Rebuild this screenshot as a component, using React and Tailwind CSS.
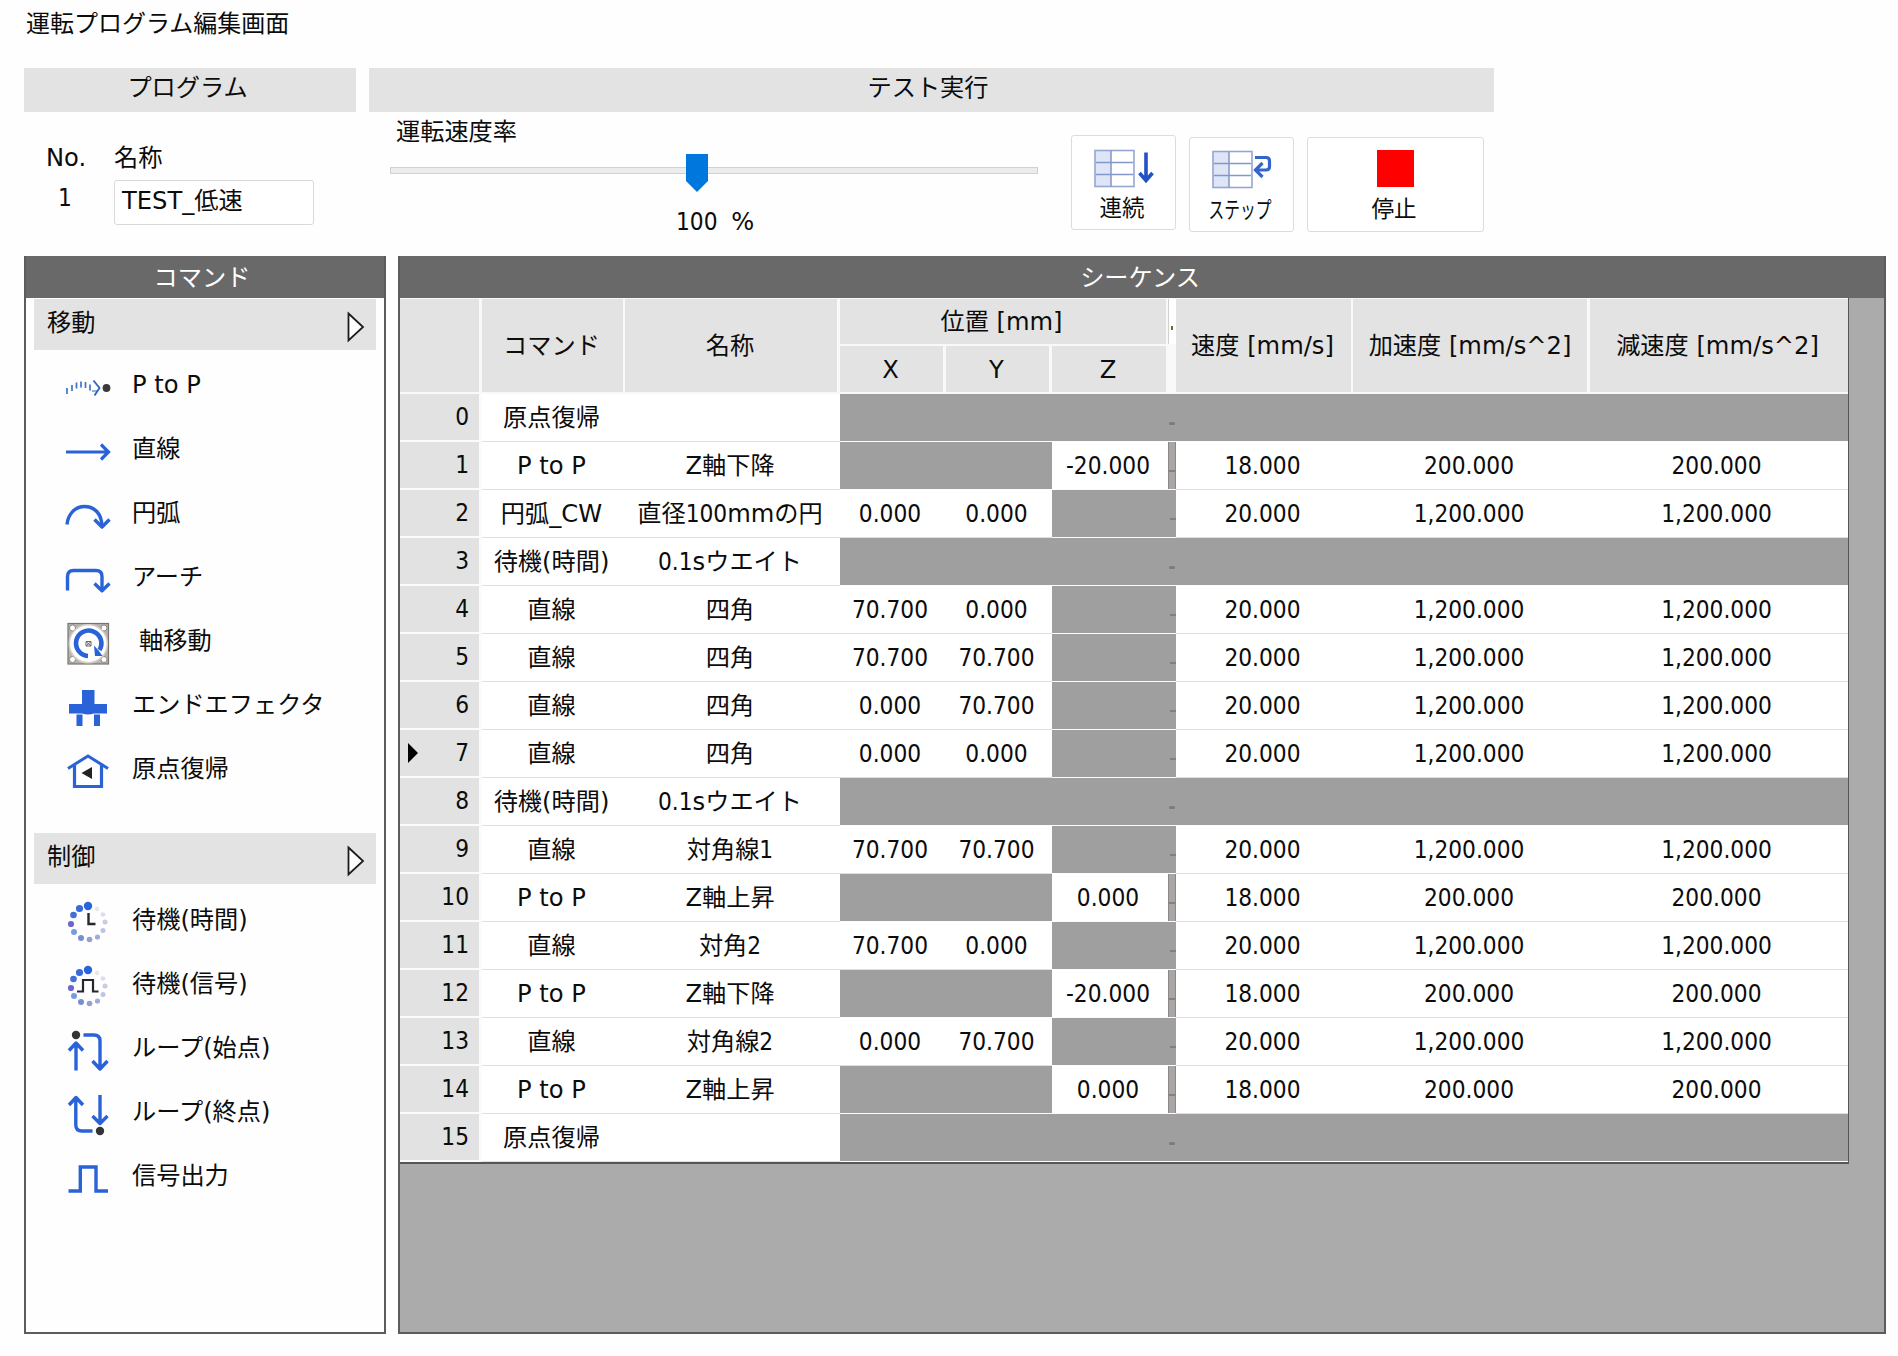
import React from "react";

const BLUE = "#2a62d8";

const stroke = {
  fill: "none",
  stroke: BLUE,
  strokeWidth: 3.4,
  strokeLinecap: "butt",
  strokeLinejoin: "round",
};

function Icon({ children }) {
  return (
    <svg width="48" height="48" viewBox="0 0 48 48" className="mr-[20px] shrink-0">
      {children}
    </svg>
  );
}

const dial = [
  [24, 8, 4.2, "#2b63dc", 1],
  [15.5, 10.5, 3.6, "#2b63dc", 0.95],
  [9.5, 17, 3.3, "#3a67d6", 0.95],
  [7, 26, 3.1, "#5a56c8", 0.9],
  [10, 34, 3, "#4a78d8", 0.75],
  [17, 40, 3, "#5272c8", 0.8],
  [25.5, 41.5, 2.8, "#6f80c4", 0.75],
  [33.5, 39, 2.6, "#6f80c4", 0.65],
  [39, 32.5, 2.5, "#8896cc", 0.55],
  [41, 24, 2.5, "#8f98d0", 0.5],
  [39, 16.5, 2.3, "#a8acd8", 0.4],
  [33, 11, 2.2, "#a8a8d0", 0.3],
];

function Dial() {
  return dial.map(([x, y, r, c, o]) => (
    <circle key={x + "-" + y} cx={x} cy={y} r={r} fill={c} opacity={o} />
  ));
}

const icons = {
  ptop: (
    <Icon>
      {[
        [3, 28], [8, 25], [12.5, 22.5], [17, 21.5], [21.5, 22], [26, 24.5],
      ].map(([x, y]) => (
        <path key={x} d={`M${x} ${y - 3}V${y + 3}`} stroke="#3f74c8" strokeWidth="1.7" />
      ))}
      <path d="M28 28H33" fill="none" stroke="#5a88d0" strokeWidth="1.300" />
      <path d="M29.500 17.500L35.500 25L30.500 32.500" fill="none" stroke="#2e68c0" strokeWidth="1.900" />
      <circle cx="42.500" cy="25" r="3.900" fill="#3a3a3e" />
    </Icon>
  ),
  line: (
    <Icon>
      <path d="M2 25H44M37 17.500L44.500 25L37 32.500" {...stroke} strokeWidth="3.200" strokeLinejoin="miter" />
    </Icon>
  ),
  arc: (
    <Icon>
      <path d="M3 33.500C4 23 11 15.500 20.500 15.500C31 15.500 37.500 23 38 35" {...stroke} />
      <path d="M30.500 28.500L38 36L45.500 28.500" {...stroke} />
    </Icon>
  ),
  arch: (
    <Icon>
      <path d="M3.500 35.500V21.500Q3.500 15.500 9.500 15.500H32Q38 15.500 38 21.500V35" {...stroke} />
      <path d="M30.500 28.500L38 35.800L45.500 28.500" {...stroke} />
    </Icon>
  ),
  axis: (
    <Icon>
      <rect x="4" y="4.500" width="40.500" height="40.500" fill="#b5b3b0" stroke="#77736f" strokeWidth="1.200" />
      {[[8.500, 9], [40, 9], [8.500, 40.500], [40, 40.500]].map(([x, y]) => (
        <circle key={x + "-" + y} cx={x} cy={y} r="3" fill="#fff" stroke="#77736f" strokeWidth="0.800" />
      ))}
      <circle cx="24.300" cy="24.700" r="19" fill="#fff" stroke="#d6cfca" strokeWidth="1.500" />
      <path d="M24 37A12.700 12.700 0 1 1 35.500 31" fill="none" stroke={BLUE} strokeWidth="4.600" />
      <path d="M30 26.500L31 37L38.500 37L35 32Z" fill={BLUE} />
      <path d="M22 22.500V27H27V22.500ZM22 22.500L27 27M27 22.500L22 27" fill="none" stroke="#666" strokeWidth="1" />
    </Icon>
  ),
  effector: (
    <Icon>
      <path d="M18 7H30.500V21H43V30.500H30Q24 32.500 18 30.500H5V21H18Z" fill={BLUE} />
      <path d="M12.500 31.500H18.500V43H12.500ZM30 31.500H36V43H30Z" fill={BLUE} />
    </Icon>
  ),
  home: (
    <Icon>
      <path d="M4 21.500L24 9L44 21.500" {...stroke} strokeWidth="3" strokeLinejoin="miter" />
      <path d="M10.500 18V39.500H37.500V18" {...stroke} strokeWidth="3.200" strokeLinejoin="miter" />
      <path d="M17.500 26L28 20V32Z" fill="#222" />
    </Icon>
  ),
  waitTime: (
    <Icon>
      <Dial />
      <path d="M24.500 15V26H31.500" fill="none" stroke="#26262e" strokeWidth="2.400" />
    </Icon>
  ),
  waitSignal: (
    <Icon>
      <Dial />
      <path d="M13 29.500H19V18H29V29.500H34.500" fill="none" stroke="#26262e" strokeWidth="2.200" />
    </Icon>
  ),
  loopStart: (
    <Icon>
      <circle cx="12" cy="9" r="4.200" fill="#333338" />
      <path d="M12 44.500V18M5 24.500L12 17L19 24.500" {...stroke} />
      <path d="M19.500 9H30Q36 9 36 15V42M28.500 35L36 43L43.500 35" {...stroke} />
    </Icon>
  ),
  loopEnd: (
    <Icon>
      <path d="M5 15L12 7.500L19 15M11.800 8.500V35Q11.800 41 18 41H28.500" {...stroke} />
      <path d="M36 5V33M28.500 26L36 33.500L43.500 26" {...stroke} />
      <circle cx="36" cy="41" r="4.200" fill="#333338" />
    </Icon>
  ),
  output: (
    <Icon>
      <path d="M4.500 37H16.300V13H32V37H44" {...stroke} strokeLinejoin="miter" />
    </Icon>
  ),
};

function TableGlyph({ children }) {
  return (
    <svg width="60" height="40" viewBox="0 0 60 40" className="block">
      <rect x="1" y="1.500" width="16" height="36" fill="#dde5f7" />
      <rect x="1" y="1.500" width="39" height="36" fill="none" stroke="#97a6cf" strokeWidth="1.600" />
      <path d="M17 1.500V37.500M2 13.500H39M2 25.500H39" stroke="#8497c9" strokeWidth="1.500" />
      {children}
    </svg>
  );
}

function RunButton({ className, children, label, labelClass }) {
  return (
    <button
      className={
        "flex h-[95px] flex-col items-center rounded-[3px] border border-[#dcdcdc] bg-white text-[22.5px] leading-[28px] " +
        className
      }
    >
      {children}
      <span className={"block whitespace-nowrap " + labelClass}>{label}</span>
    </button>
  );
}

/* Digits use the condensed face; Latin letters and brackets use the regular width. */
function Label({ text }) {
  return text.split(/( ?\[.*\]|P to P|No\.|[A-Za-z_()%]+)/).map((part, i) =>
    i % 2 === 0 ? (
      part
    ) : (
      <span key={i} className="font-['DejaVu_Sans',sans-serif]">
        {part}
      </span>
    )
  );
}

function SectionBar({ title }) {
  return (
    <div className="ml-[8px] flex h-[51px] w-[342px] items-center justify-between bg-[#e3e3e3] pr-[11px] pl-[13px]">
      <span className="-mt-[3px]">{title}</span>
      <svg width="19" height="32" viewBox="0 0 19 32" className="mt-[5px]">
        <path d="M2.500 2.500L17 16L2.500 29.500Z" fill="#fff" stroke="#1c1c1c" strokeWidth="1.800" />
      </svg>
    </div>
  );
}

function CommandItem({ icon, label, indent }) {
  return (
    <li className="flex h-16 items-center pl-[38px]">
      <div className="mt-[4px]">{icons[icon]}</div>
      <span className={indent ? "ml-[7px]" : ""}>
        <Label text={label} />
      </span>
    </li>
  );
}

const moveCommands = [
  ["ptop", "P to P"],
  ["line", "直線"],
  ["arc", "円弧"],
  ["arch", "アーチ"],
  ["axis", "軸移動", true],
  ["effector", "エンドエフェクタ"],
  ["home", "原点復帰"],
];

const controlCommands = [
  ["waitTime", "待機(時間)"],
  ["waitSignal", "待機(信号)"],
  ["loopStart", "ループ(始点)"],
  ["loopEnd", "ループ(終点)"],
  ["output", "信号出力"],
];

const FAST = ["20.000", "1,200.000", "1,200.000"];
const SLOW = ["18.000", "200.000", "200.000"];

const rows = [
  ["原点復帰", ""],
  ["P to P", "Z軸下降", null, null, "-20.000", ...SLOW],
  ["円弧_CW", "直径100mmの円", "0.000", "0.000", null, ...FAST],
  ["待機(時間)", "0.1sウエイト"],
  ["直線", "四角", "70.700", "0.000", null, ...FAST],
  ["直線", "四角", "70.700", "70.700", null, ...FAST],
  ["直線", "四角", "0.000", "70.700", null, ...FAST],
  ["直線", "四角", "0.000", "0.000", null, ...FAST],
  ["待機(時間)", "0.1sウエイト"],
  ["直線", "対角線1", "70.700", "70.700", null, ...FAST],
  ["P to P", "Z軸上昇", null, null, "0.000", ...SLOW],
  ["直線", "対角2", "70.700", "0.000", null, ...FAST],
  ["P to P", "Z軸下降", null, null, "-20.000", ...SLOW],
  ["直線", "対角線2", "0.000", "70.700", null, ...FAST],
  ["P to P", "Z軸上昇", null, null, "0.000", ...SLOW],
  ["原点復帰", ""],
];

const COLS = "grid grid-cols-[82px_143px_215px_106px_106px_124px_177px_237px_258px]";

function Cell({ value, className = "pr-[4px]" }) {
  if (value == null) return <div className="mb-[1px] bg-[#9f9f9f]" />;
  return (
    <div
      className={
        "flex items-center justify-center border-b border-[#e0e0e0] bg-white whitespace-nowrap " +
        className
      }
    >
      <span>
        <Label text={value} />
      </span>
    </div>
  );
}

function ZCell({ value }) {
  return (
    <div className="mb-[1px] flex">
      <div
        className={
          value == null
            ? "flex-1 bg-[#9f9f9f]"
            : "flex flex-1 items-center justify-center bg-white pr-[4px]"
        }
      >
        {value}
      </div>
      <div
        className={
          value == null
            ? "flex w-[8px] justify-end bg-[#9f9f9f] pt-[28px]"
            : "flex w-[8px] justify-end border-x border-x-[#8b8888] bg-[#aaa6a6] pt-[28px]"
        }
      >
        <div className="h-[2px] w-[6px] bg-[#857f7f]" />
      </div>
    </div>
  );
}

function Row({ index, data }) {
  const [command, name, x, y, z, v, a, d] = data;
  const blocked = data.length === 2;
  return (
    <div className={COLS + " h-12 bg-[#fbfbfb]"}>
      <div className="mr-[3px] mb-[2px] flex items-center justify-between bg-[#e2e2e2] pr-[10px] pl-[8px]">
        <svg width="11" height="20" viewBox="0 0 11 20">
          {index === 7 && <path d="M0 0L10 10L0 20Z" fill="#000" />}
        </svg>
        <span>{index}</span>
      </div>
      <Cell value={command} />
      <Cell value={name} className="pr-[5px]" />
      {blocked ? (
        <div className="col-span-6 mb-[1px] flex bg-[#9f9f9f] pt-[28px] pl-[329px]">
          <div className="h-[3px] w-[6px] rounded-full bg-[#7f7b7b]" />
        </div>
      ) : (
        <>
          <Cell value={x} className="pr-[6px]" />
          <Cell value={y} className="pr-[5px]" />
          <ZCell value={z} />
          <Cell value={v} />
          <Cell value={a} className="pr-[5px]" />
          <Cell value={d} className="pr-[5px]" />
        </>
      )}
    </div>
  );
}

function Head({ text = "", className = "" }) {
  return (
    <div
      className={
        "flex items-center justify-center bg-[#e3e3e3] whitespace-nowrap " + className
      }
    >
      <span className="whitespace-pre">
        <Label text={text} />
      </span>
    </div>
  );
}

function SequenceTable() {
  return (
    <div className="w-[1449px] border-r border-b-2 border-[#55565a] bg-white">
      <div className={COLS + " h-[96px] grid-rows-[47px_48px] bg-[#f9f9f9] pt-[1px]"}>
        <Head className="row-span-2 mr-[3px] mb-[2px]" />
        <Head className="row-span-2 mr-[2px] mb-[2px] pr-[2px]" text="コマンド" />
        <Head className="row-span-2 mr-[3px] mb-[2px] pr-[2px]" text="名称" />
        <div className="col-span-3 mb-[2px] flex">
          <Head className="flex-1 pr-[3px]" text="位置 [mm]" />
          <div className="ml-[2px] flex w-[8px] border-l border-[#d0d0d0] bg-white pt-[27px] pl-[2px]">
            <div className="h-[4px] w-[2px] bg-[#7a6436]" />
          </div>
        </div>
        <Head className="row-span-2 row-start-1 col-start-7 mr-[2px] mb-[2px] pr-[2px]" text="速度 [mm/s]" />
        <Head className="row-span-2 row-start-1 col-start-8 mr-[3px] mb-[2px]" text="加速度 [mm/s^2]" />
        <Head className="row-span-2 row-start-1 col-start-9 mb-[2px] pr-[3px]" text="減速度 [mm/s^2]" />
        <Head className="col-start-4 row-start-2 mr-[3px] mb-[2px] pt-[1px] pr-[2px]" text="X" />
        <Head className="col-start-5 row-start-2 mr-[3px] mb-[2px] pt-[1px] pr-[2px]" text="Y" />
        <Head className="col-start-6 row-start-2 mr-[10px] mb-[2px] pt-[1px] pr-[2px]" text="Z" />
      </div>
      {rows.map((data, i) => (
        <Row key={i} index={i} data={data} />
      ))}
    </div>
  );
}

export default function App() {
  return (
    <div className="h-[1356px] w-[1898px] overflow-hidden bg-[#fefefe] pl-[24px] font-['DejaVu_Sans_Condensed','Noto_Sans_CJK_JP',sans-serif] text-[24.2px] leading-[30px] text-[#0c0c0c]">
      <h1 className="pt-[9px] pl-[2px] text-[24px] leading-[30px]">運転プログラム編集画面</h1>

      <div className="mt-[29px] flex h-[188px] items-start gap-[13px]">
        <section className="w-[332px]">
          <h2 className="flex h-[44px] items-center justify-center bg-[#e3e3e3] pr-[5px] pb-[4px]">
            プログラム
          </h2>
          <div className="mt-[31px] flex pl-[22px]">
            <div className="w-[68px]">
              <div>
                <Label text="No." />
              </div>
              <div className="mt-[10px] pl-[12px]">1</div>
            </div>
            <div>
              <div>名称</div>
              <div className="mt-[7px] flex h-[45px] w-[200px] items-center rounded-[3px] border border-[#d9d9d9] bg-white pb-[3px] pl-[7px]">
                <span>
                  <Label text="TEST_低速" />
                </span>
              </div>
            </div>
          </div>
        </section>

        <section className="w-[1125px]">
          <h2 className="flex h-[44px] items-center justify-center bg-[#e3e3e3] pr-[7px] pb-[4px]">
            テスト実行
          </h2>
          <div className="flex items-start">
            <div className="w-[702px] pt-[5px] pl-[21px]">
              <div className="pl-[6px]">運転速度率</div>
              <div className="mt-[7px] grid w-[648px] items-center">
                <div className="col-start-1 row-start-1 -mt-[5px] h-[7px] border border-[#cfd2d4] bg-[#ebeced]" />
                <svg width="22" height="38" viewBox="0 0 22 38" className="col-start-1 row-start-1 ml-[296px]">
                  <path d="M0 0H22V27L11 38L0 27Z" fill="#0077dc" />
                </svg>
              </div>
              <div className="mt-[15px] pl-[286px] whitespace-pre">
                <Label text="100  %" />
              </div>
            </div>
            <RunButton className="mt-[23px] w-[105px] pt-[13px]" label="連続" labelClass="mt-[5px] -ml-[3px]">
              <TableGlyph>
                <path d="M52 3.500V31M45.500 24L52 31.500L58.500 24" fill="none" stroke="#2153c4" strokeWidth="3.600" />
              </TableGlyph>
            </RunButton>
            <RunButton
              className="mt-[25px] ml-[13px] w-[105px] pt-[12px]"
              label={<span className="inline-block origin-center scale-x-[0.7]">ステップ</span>}
              labelClass="mt-[6px] -ml-[2px]"
            >
              <TableGlyph>
                <path d="M43 7.500H54Q57.500 7.500 57.500 11V16.500Q57.500 20 54 20H45" fill="none" stroke="#3465cb" strokeWidth="3.200" />
                <path d="M50.500 13L43.500 20L50.500 27" fill="none" stroke="#3465cb" strokeWidth="3.200" />
              </TableGlyph>
            </RunButton>
            <RunButton className="mt-[25px] ml-[13px] w-[177px] pt-[12px]" label="停止" labelClass="mt-[8px] -ml-[3px]">
              <div className="h-[37px] w-[37px] bg-[#fe0000]" />
            </RunButton>
          </div>
        </section>
      </div>

      <div className="flex h-[1078px] gap-[12px]">
        <aside className="w-[362px] border-2 border-t-0 border-[#5c5c5f] bg-[#fefefe]">
          <h2 className="mb-[1px] flex h-[42px] items-center justify-center bg-[#696969] pt-[2px] pr-[6px] text-white">
            コマンド
          </h2>
          <SectionBar title="移動" />
          <ul className="mt-[3px] mb-[32px]">
            {moveCommands.map(([icon, label, indent]) => (
              <CommandItem key={icon} icon={icon} label={label} indent={indent} />
            ))}
          </ul>
          <SectionBar title="制御" />
          <ul className="mt-[4px]">
            {controlCommands.map(([icon, label]) => (
              <CommandItem key={icon} icon={icon} label={label} />
            ))}
          </ul>
        </aside>

        <main className="w-[1488px] border-2 border-t-0 border-[#5c5c5f] bg-[#ababab]">
          <h2 className="flex h-[42px] items-center justify-center bg-[#696969] pt-[2px] pr-[4px] text-white">
            シーケンス
          </h2>
          <SequenceTable />
        </main>
      </div>
    </div>
  );
}
